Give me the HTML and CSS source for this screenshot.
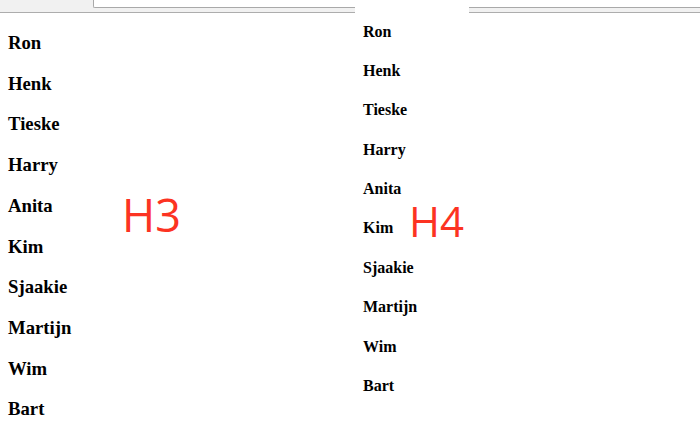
FILE: index.html
```html
<!DOCTYPE html>
<html>
<head>
<meta charset="utf-8">
<link rel="stylesheet" href="styles.css">
</head>
<body>
<div class="page">
  <section class="shot shot-left">
    <div class="chrome">
      <div class="chrome-nav"></div>
      <div class="chrome-address"></div>
    </div>
    <div class="list list-h3">
      <h3>Ron</h3>
      <h3>Henk</h3>
      <h3>Tieske</h3>
      <h3>Harry</h3>
      <h3>Anita</h3>
      <h3>Kim</h3>
      <h3>Sjaakie</h3>
      <h3>Martijn</h3>
      <h3>Wim</h3>
      <h3>Bart</h3>
      <span class="label label-h3">H3</span>
    </div>
  </section>
  <section class="shot shot-right">
    <div class="chrome-right">
      <div class="chrome-blank"></div>
      <div class="chrome-rest"></div>
    </div>
    <div class="list list-h4">
      <h4>Ron</h4>
      <h4>Henk</h4>
      <h4>Tieske</h4>
      <h4>Harry</h4>
      <h4>Anita</h4>
      <h4>Kim</h4>
      <h4>Sjaakie</h4>
      <h4>Martijn</h4>
      <h4>Wim</h4>
      <h4>Bart</h4>
      <span class="label label-h4">H4</span>
    </div>
  </section>
</div>
</body>
</html>
```
FILE: styles.css
```css
html, body {
  margin: 0;
  padding: 0;
  background: #fff;
  overflow: hidden;
}
body {
  width: 700px;
  height: 430px;
  font-family: "Liberation Serif", "Times New Roman", serif;
  color: #000;
}
.page {
  display: flex;
  width: 700px;
  height: 430px;
}
.shot {
  display: flex;
  flex-direction: column;
}
.shot-left {
  width: 355px;
  flex: none;
}
.shot-right {
  flex: 1;
}
.chrome {
  display: flex;
  height: 12px;
  background: #f1f1f1;
  border-bottom: 1px solid #adadad;
  flex: none;
}
.chrome-nav {
  width: 93px;
  flex: none;
}
.chrome-address {
  flex: 1;
  height: 7px;
  background: #fff;
  border-left: 1px solid #a9a9a9;
  border-bottom: 1px solid #a9a9a9;
  border-bottom-left-radius: 2px;
}
.chrome-right {
  display: flex;
  height: 13px;
  flex: none;
}
.chrome-blank {
  width: 114px;
  flex: none;
  background: #fff;
}
.chrome-rest {
  flex: 1;
  display: flex;
  flex-direction: column;
}
.chrome-rest::before {
  content: "";
  display: block;
  height: 7px;
  background: #fff;
  border-bottom: 1px solid #a9a9a9;
}
.chrome-rest::after {
  content: "";
  display: block;
  flex: 1;
  background: #f1f1f1;
  border-bottom: 1px solid #adadad;
}
.list {
  position: relative;
  flex: 1;
  padding: 0 8px;
}
.list-h3 h3 {
  font-size: 18.72px;
  font-weight: bold;
  line-height: 21.7px;
  margin: 19px 0;
}
.list-h4 h4 {
  font-size: 16px;
  font-weight: bold;
  line-height: 18px;
  margin: 21.4px 0;
}
.list-h4 h4:first-child {
  margin-top: 9.5px;
}
.label {
  position: absolute;
  font-family: "Open Sans", "Noto Sans", sans-serif;
  font-weight: normal;
  color: #fc3322;
  line-height: 1;
}
.label-h3 {
  left: 122px;
  top: 179px;
  font-size: 45px;
}
.label-h4 {
  left: 54px;
  top: 187px;
  font-size: 42px;
}
```
